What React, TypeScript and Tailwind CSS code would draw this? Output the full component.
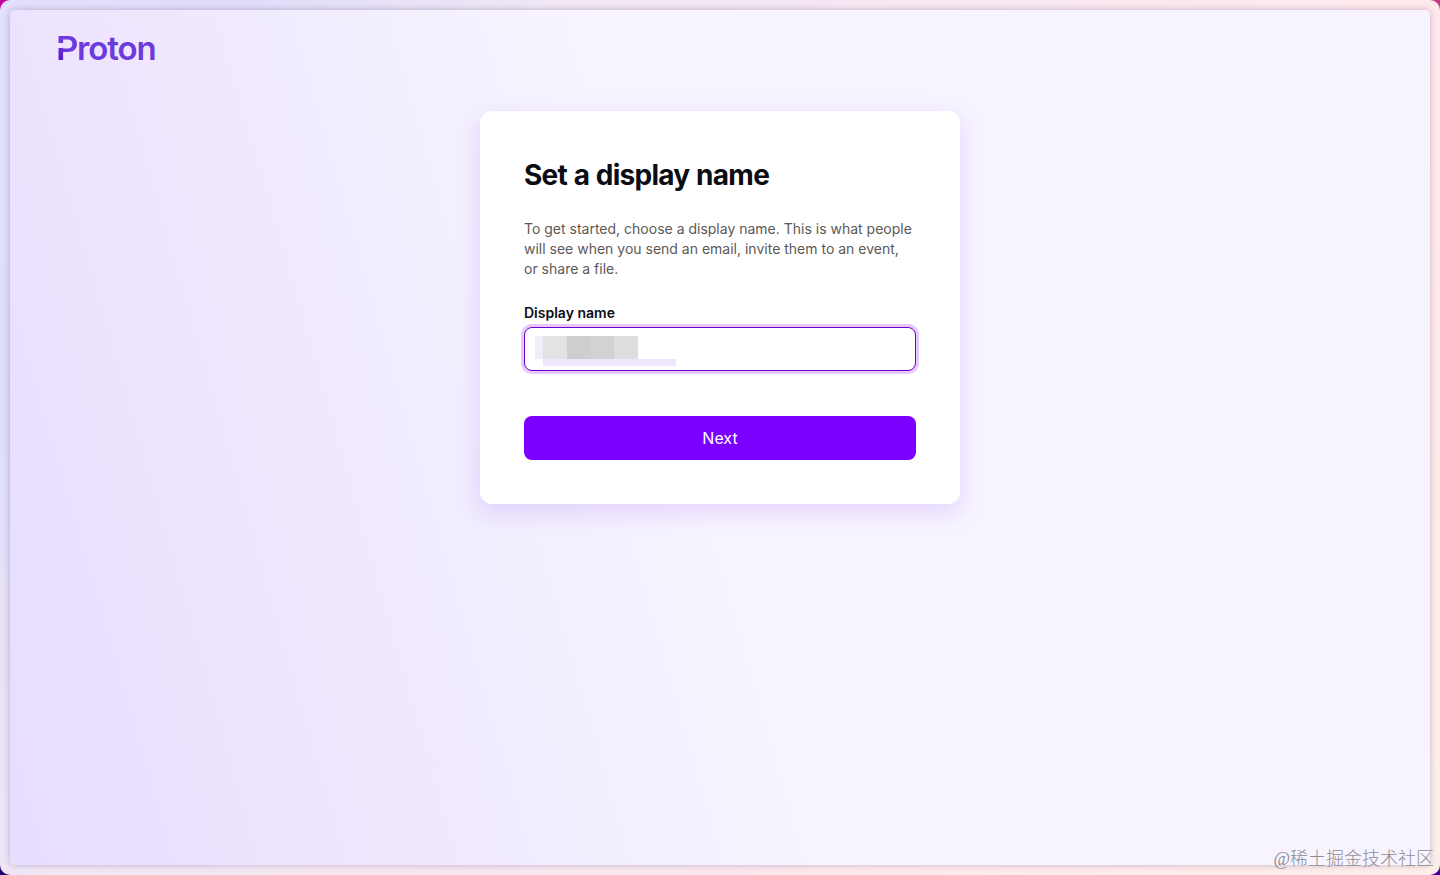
const redactedBlocks = [
  "w-2 bg-[#f0edf7]",
  "w-6 bg-[#e3e2e5]",
  "w-6 bg-[#cecdd0]",
  "w-[23px] bg-[#d2d1d4]",
  "w-6 bg-[#dddcdf]",
];

function Logo() {
  return (
    <div className="relative h-6 w-24 font-['Inter'] text-[33px] leading-6 font-semibold text-[#6d3ade]">
      <div className="-ml-[2px] flex whitespace-nowrap">
        <span className="-my-2 w-[21px] origin-left scale-x-[1.06] bg-linear-to-tr from-[#5200d0] from-15% to-[#6d3ade] to-45% bg-clip-text py-2 text-transparent">
          P
        </span>
        <span className="tracking-[-1.1px]">roton</span>
      </div>
      {/* break in the stem of the P */}
      <div className="absolute top-[7px] left-0 h-[5px] w-[6px] rounded-br-xs bg-[#efe6fe]" />
    </div>
  );
}

function DisplayNameField() {
  return (
    <div className="mt-6">
      <label className="block text-sm leading-5 font-semibold">Display name</label>
      <div className="mt-1 h-11 rounded-lg border border-[#6d00c9] bg-white pt-2 pl-[10px] ring-3 ring-[#e6c8fd]">
        <div className="flex h-[23px]">
          {redactedBlocks.map((block, i) => (
            <div key={i} className={block} />
          ))}
        </div>
        <div className="ml-2 h-[7px] w-[133px] bg-[#efe6fd]" />
      </div>
    </div>
  );
}

export default function App() {
  return (
    <div className="h-[875px] w-full bg-[linear-gradient(to_right,#c0009b_0%,#c0009b_50%,#c13a86_50%)] font-['Inter',sans-serif] text-[#0c0c14]">
      <div className="relative h-full overflow-hidden">
        <div className="absolute bottom-0 left-0 size-4 bg-[#24006b]" />
        <div className="absolute right-0 bottom-0 size-4 bg-[#40009b]" />
        <div className="relative h-full rounded-[10px] bg-[linear-gradient(120deg,#e3e0fa_0%,#dfddf9_12%,#f0e7f5_28%,#ffe9ec_74%,#fdeeea_100%)] p-[10px]">
          <main className="flex h-full flex-col rounded-[5px] bg-[linear-gradient(74deg,#e7ddff_0%,#f0e6fe_22%,#f1edfe_34%,#f7f4ff_48%,#f7f4ff_100%)] shadow-[0_0_6px_rgba(60,30,90,0.28)]">
            <header className="pt-[26px] pl-12">
              <Logo />
            </header>
            <section className="mx-auto mt-[51px] h-[393px] w-[480px] rounded-xl bg-white px-11 pt-[46px] shadow-[0_8px_24px_rgba(150,80,240,0.2)]">
              <h1 className="text-[28px] leading-9 font-bold tracking-[-0.73px] [word-spacing:0.7px]">Set a display name</h1>
              <p className="mt-[26px] text-sm leading-5 text-[#5c5958]">
                To get started, choose a display name. This is what people will see when you send an email, invite them to an event, or share a file.
              </p>
              <DisplayNameField />
              <button className="mt-[45px] h-11 w-full rounded-lg bg-[#7c00ff] text-base text-white">
                Next
              </button>
            </section>
          </main>
          <div className="absolute right-[6px] bottom-[4px] font-['Liberation_Serif','Noto_Sans_CJK_SC',serif] text-[18px] leading-6 font-light whitespace-nowrap text-[#8f8c94]">
            @稀土掘金技术社区
          </div>
        </div>
      </div>
    </div>
  );
}
